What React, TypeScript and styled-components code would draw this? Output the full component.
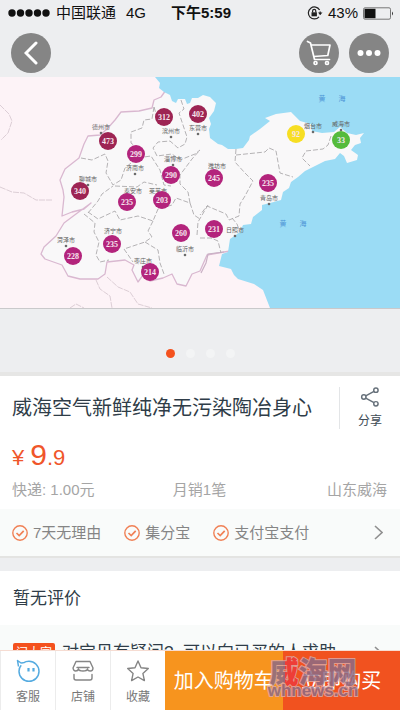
import React from 'react';
import styled, { createGlobalStyle } from 'styled-components';

const GlobalStyle = createGlobalStyle`
  * { box-sizing: border-box; }
  body {
    margin: 0;
    background: #edeef0;
    font-family: "Liberation Sans", "Noto Sans CJK SC", sans-serif;
    color: #2f3d48;
  }
  button { font: inherit; color: inherit; border: 0; padding: 0; background: none; cursor: pointer; }
  h1, h2, p, ul { margin: 0; padding: 0; font-weight: 400; }
  svg { display: block; }
`;

const Page = styled.div`
  display: flex;
  flex-direction: column;
  height: 100vh;
`;

const Scroll = styled.main`
  flex: 1;
  min-height: 0;
  overflow-y: auto;
  scrollbar-width: none;
`;

const StatusBar = styled.header`
  display: grid;
  grid-template-columns: 1fr auto 1fr;
  align-items: center;
  height: 26px;
  padding: 0 6px 0 8px;
  color: #111;
  font-size: 15px;
  line-height: 20px;
`;

const StatusGroup = styled.div<{ $end?: boolean }>`
  display: flex;
  align-items: center;
  justify-content: ${p => (p.$end ? 'flex-end' : 'flex-start')};
  gap: ${p => (p.$end ? 5 : 6)}px;
  white-space: nowrap;
`;

const Network = styled.span`
  margin-left: 4px;
`;

const Clock = styled.time`
  font-weight: 700;
`;

const NavBar = styled.nav`
  display: flex;
  align-items: center;
  gap: 10px;
  height: 51px;
  padding: 3px 11px 0;
`;

const RoundButton = styled.button<{ $first?: boolean }>`
  display: flex;
  align-items: center;
  justify-content: center;
  && {
    width: 40px;
    height: 40px;
    border-radius: 50%;
    background: #858585;
    margin-right: ${p => (p.$first ? 'auto' : '0')};
  }
`;

const MapPicture = styled.svg`
  width: 100%;
  height: auto;
  border-bottom: 1px solid #c9c9cb;
`;

const Dots = styled.div`
  display: flex;
  justify-content: center;
  align-items: center;
  gap: 11px;
  height: 67px;
  padding-top: 25px;
  border-bottom: 4px solid #e6e6e5;
`;

const Dot = styled.button<{ $active?: boolean }>`
  && {
    width: 9px;
    height: 9px;
    border-radius: 50%;
    background: ${p => (p.$active ? '#f4511e' : '#f3f4f5')};
  }
`;

const Product = styled.section`
  background: #fff;
  padding: 11px 13px 8px 12px;
`;

const TitleRow = styled.div`
  display: flex;
  align-items: center;
  justify-content: space-between;
`;

const Title = styled.h1`
  font-size: 20px;
  line-height: 28px;
  white-space: nowrap;
`;

const ShareButton = styled.button`
  && {
    display: flex;
    flex-direction: column;
    align-items: center;
    gap: 6px;
    height: 42px;
    padding: 0 5px 0 18px;
    border-left: 1px solid #e3e5e7;
    font-size: 12px;
    line-height: 16px;
    color: #3e4a55;
  }
`;

const Price = styled.p`
  display: flex;
  align-items: baseline;
  margin-top: 8px;
  color: #f0562a;
  font-size: 22px;
  line-height: 36px;
`;

const PriceWhole = styled.span`
  margin-left: 6px;
  font-size: 30px;
`;

const Facts = styled.div`
  display: grid;
  grid-template-columns: 1fr auto 1fr;
  margin-top: 3px;
  font-size: 15px;
  line-height: 22px;
  color: #a5a5a5;
`;

const Origin = styled.span`
  text-align: right;
`;

const Guarantees = styled.button`
  && {
    display: flex;
    align-items: center;
    justify-content: space-between;
    width: 100%;
    height: 49px;
    padding: 0 17px 0 12px;
    background: #f9fbfa;
    border-bottom: 2px solid #e4e4e2;
    color: #858585;
    font-size: 15px;
    line-height: 22px;
  }
`;

const GuaranteeList = styled.span`
  display: flex;
  gap: 23px;
`;

const Guarantee = styled.span`
  display: flex;
  align-items: center;
  gap: 5px;
`;

const Reviews = styled.section`
  margin-top: 13px;
  padding: 15px 13px 13px;
  background: #fff;
`;

const ReviewsTitle = styled.h2`
  font-size: 17px;
  line-height: 26px;
`;

const Question = styled.button`
  && {
    display: flex;
    align-items: center;
    width: 100%;
    height: 56px;
    padding: 0 17px 0 13px;
    background: #f9fbfa;
    font-size: 17px;
    line-height: 24px;
    white-space: nowrap;
  }
`;

const QuestionText = styled.span`
  flex: 1;
  margin-left: 7px;
  text-align: left;
`;

const Tag = styled.span`
  padding: 0 3px;
  border-radius: 2px;
  background: #f4511e;
  color: #fff;
  font-size: 12px;
  line-height: 20px;
`;

const ActionBar = styled.footer`
  position: relative;
  display: flex;
  height: 60px;
  border-top: 1px solid #f6dcd2;
  background: #fff;
`;

const ToolButton = styled.button`
  && {
    display: flex;
    flex-direction: column;
    align-items: center;
    gap: 6px;
    width: 55px;
    padding-top: 8px;
    border-left: 1px solid #ececec;
    color: #777;
    font-size: 12px;
    line-height: 16px;
  }
`;

const BuyButton = styled.button<{ $tone: string }>`
  && {
    flex: 1;
    background: ${p => p.$tone};
    color: #fff;
    font-size: 20px;
    line-height: 28px;
    white-space: nowrap;
  }
`;

const Watermark = styled.svg`
  position: absolute;
  right: 41px;
  top: 5px;
  pointer-events: none;
  font-weight: 700;
  opacity: 0.85;
  paint-order: stroke fill;
  stroke: #dda7a3;
  stroke-width: 2px;
  fill: #8b6b86;
`;

const bubbleColor = (value: number) => (value > 300 ? '#9d2453' : '#b3247c');

const stations: { x: number; y: number; v: number; fill?: string }[] = [
  { x: 164, y: 117, v: 312 },
  { x: 198, y: 114, v: 402 },
  { x: 108, y: 141, v: 473 },
  { x: 136, y: 154, v: 299 },
  { x: 171, y: 175, v: 290 },
  { x: 80, y: 191, v: 340 },
  { x: 127, y: 202, v: 235 },
  { x: 162, y: 200, v: 203 },
  { x: 214, y: 178, v: 245 },
  { x: 268, y: 183, v: 235 },
  { x: 73, y: 256, v: 228 },
  { x: 112, y: 244, v: 235 },
  { x: 150, y: 272, v: 214 },
  { x: 181, y: 233, v: 260 },
  { x: 214, y: 229, v: 231 },
  { x: 296, y: 134, v: 92, fill: '#f7de23' },
  { x: 341, y: 140, v: 33, fill: '#55bb3c' },
];

const cities: [number, number, string][] = [
  [101, 129, '德州市'],
  [171, 133, '滨州市'],
  [198, 130, '东营市'],
  [135, 170, '济南市'],
  [173, 161, '淄博市'],
  [88, 181, '聊城市'],
  [133, 193, '泰安市'],
  [158, 193, '莱芜市'],
  [217, 168, '潍坊市'],
  [313, 128, '烟台市'],
  [341, 126, '威海市'],
  [269, 200, '青岛市'],
  [66, 242, '菏泽市'],
  [113, 233, '济宁市'],
  [143, 263, '枣庄市'],
  [185, 251, '临沂市'],
  [235, 232, '日照市'],
];

const ShandongMap = () => (
  <MapPicture viewBox="0 77 400 231" role="img" aria-label="山东空气质量地图">
    <rect x="0" y="77" width="400" height="231" fill="#fdf3f7" />
    <path
      fill="#f9f8f9"
      stroke="#d9b8d0"
      strokeWidth="1.3"
      strokeLinejoin="round"
      d="M166 90L161 97L154 100L152 108L139 111L121 112L115 120L107 129L100 135L88 136L84 144L79 158L65 169L60 180L63 190L64 197L62 216L72 212L84 209L91 203L76 214L64 223L56 236L44 247L41 254L45 259L62 265L68 276L80 279L98 279L105 274L107 262L125 260L134 265L132 270L138 282L143 275L150 281L163 278L172 274L177 284L186 286L192 274L200 271L207 255L218 253L224 252L300 240L390 150L350 100z"
    />
    <path
      fill="#9bdcf5"
      d="M155 77L160 83L159 88L164 92L170 95L172 101L176 103L178 99L185 99L187 104L190 103L192 98L198 98L203 95L210 97L216 103L214 111L209 118L211 124L209 129L210 138L218 144L222 145L228 149L236 149L243 148L249 140L250 136L260 129L270 121L265 118L276 114L291 112L300 121L311 124L312 131L322 133L334 132L340 127L347 133L356 135L364 133L360 138L361 143L355 145L351 150L358 155L357 160L347 163L344 156L340 153L335 159L325 161L315 166L305 171L298 177L291 182L289 188L283 192L281 200L270 203L262 205L262 210L253 217L251 224L243 225L240 232L230 239L228 252L222 254L219 266L231 269L234 275L238 279L254 284L263 290L270 308H400V77z"
    />
    <path fill="none" stroke="#c9b1c5" strokeWidth="1.2" d="M224 252L208 254L206 263L201 273" />
    <g fill="none" stroke="#adaaad" strokeWidth="0.9" strokeDasharray="5 2" strokeLinejoin="round">
      <path d="M154 107L152 119L144 120L142 128L131 132L131 143L136 147M154 107L157 117" />
      <path d="M181 100L184 109L179 113L184 128L187 137L185 144L178 148L170 141L158 142L153 148L157 156L172 154L180 160L195 154L200 150" />
      <path d="M81 158L92 160L105 154L108 161L106 173L113 185L121 180L125 168L137 158L151 156L160 170L164 185L171 186" />
      <path d="M88 213L98 201L102 194L113 186M88 212L98 219L115 211L120 220L138 216L153 221L158 209L172 205L176 198L190 203L188 192L180 184L180 175L192 159L200 150" />
      <path d="M84 214L95 223L94 232L99 242L96 255L100 262L109 260" />
      <path d="M115 186L137 187L144 182L157 185M153 221L148 231L152 237L145 242L124 249L133 262M145 242L158 250L160 263L164 274" />
      <path d="M236 149L235 162L245 173L253 181L245 196L240 204L239 216L229 220L226 214L207 206L200 215M236 155L265 152L269 148L276 151L278 162L280 173L293 177" />
      <path d="M331 136L328 145L323 149L306 151L302 158L310 166" />
      <path d="M200 238L211 238L218 241L221 253M190 203L194 215L200 219M232 218L237 224L240 232M197 235L198 222L208 205" />
    </g>
    <g fill="none" stroke="#d8c9d1" strokeWidth="0.9" strokeLinejoin="round" strokeDasharray="6 1">
      <path d="M0 105L9 114L12 121L8 133L1 140M0 187L12 192L24 193L36 200L52 200M96 280L100 289L110 296L112 308M107 277L118 287L130 292L138 304L152 308M70 308L76 304L84 308" />
    </g>
    <g fontFamily='"Liberation Serif", "Noto Sans CJK SC", serif' textAnchor="middle">
      {cities.map(([x, y, name]) => (
        <g key={name}>
          <text x={x} y={y} fontSize="6" fill="#626262">{name}</text>
          <circle cx={x} cy={y + 4} r="1.3" fill="#6b6b6b" />
        </g>
      ))}
      <g fontSize="7" fill="#4d94d6">
        <text x="322" y="101">黄</text>
        <text x="342" y="101">海</text>
        <text x="283" y="226">黄</text>
        <text x="303" y="226">海</text>
      </g>
      {stations.map(s => (
        <g key={`${s.x}-${s.y}`}>
          <circle cx={s.x} cy={s.y} r="9" fill={s.fill ?? bubbleColor(s.v)} />
          <text x={s.x} y={s.y + 3} fontSize="8" fontWeight="700" fill="#f7e6ef">{s.v}</text>
        </g>
      ))}
    </g>
  </MapPicture>
);

const Chevron = () => (
  <svg width="9" height="15" viewBox="0 0 9 15" fill="none" stroke="#909090" strokeWidth="1.6" aria-hidden="true">
    <path d="M1 1l7 6.500-7 6.500" />
  </svg>
);

const Check = () => (
  <svg width="16" height="16" viewBox="0 0 16 16" fill="none" stroke="#f08055" strokeWidth="1.4" aria-hidden="true">
    <circle cx="8" cy="8" r="7.200" />
    <path d="M4.500 8l2.700 2.600 4.500-4.800" strokeWidth="1.7" />
  </svg>
);

export default function App() {
  return (
    <Page>
      <GlobalStyle />
      <Scroll>
        <StatusBar>
          <StatusGroup>
            <svg width="42" height="8" viewBox="0 0 42 8" fill="#111" aria-hidden="true">
              {[4, 12.5, 21, 29.500, 38].map(x => <circle key={x} cx={x} cy="4" r="3.700" />)}
            </svg>
            <span>中国联通</span>
            <Network>4G</Network>
          </StatusGroup>
          <Clock>下午5:59</Clock>
          <StatusGroup $end>
            <svg width="16" height="14" viewBox="0 0 16 14" fill="none" stroke="#222" strokeWidth="1.2" aria-hidden="true">
              <path d="M12.600 4A6 6 0 1 0 12 10.800M13 8.500a6 6 0 0 0 0-3" />
              <path d="M11 6.500h4.500L13.200 9z" fill="#222" stroke="none" />
              <rect x="4.500" y="6.300" width="5.400" height="4" fill="#222" stroke="none" />
              <path d="M5.600 6.500V5a1.600 1.600 0 0 1 3.200 0v1.500" />
            </svg>
            <span>43%</span>
            <svg width="31" height="13" viewBox="0 0 31 13" aria-hidden="true">
              <rect x=".5" y=".8" width="27" height="11.400" rx="1.500" fill="none" stroke="#777" />
              <rect x="1.500" y="1.800" width="11" height="9.400" fill="#111" />
              <path d="M29 4.500q2 2 0 4z" fill="#333" />
            </svg>
          </StatusGroup>
        </StatusBar>
        <NavBar>
          <RoundButton $first aria-label="返回">
            <svg width="14" height="24" viewBox="0 0 14 24" fill="none" stroke="#fff" strokeWidth="3" strokeLinecap="round">
              <path d="M12 2L2 12l10 10" />
            </svg>
          </RoundButton>
          <RoundButton aria-label="购物车">
            <svg width="26" height="26" viewBox="0 0 26 26" fill="none" stroke="#fff" strokeWidth="1.700" strokeLinejoin="round" strokeLinecap="round">
              <path d="M1.500 1.500L4.500 3l4 16.500h15M5.500 5h18.500l-2.200 10.500-14 1" />
              <circle cx="9.500" cy="23" r="1.500" />
              <circle cx="21" cy="23" r="1.500" />
            </svg>
          </RoundButton>
          <RoundButton aria-label="更多">
            <svg width="24" height="6" viewBox="0 0 24 6" fill="#fff">
              <circle cx="3.500" cy="3" r="3" />
              <circle cx="12" cy="3" r="3" />
              <circle cx="20.500" cy="3" r="3" />
            </svg>
          </RoundButton>
        </NavBar>
        <ShandongMap />
        <Dots>
          {[1, 2, 3, 4].map(n => <Dot key={n} $active={n === 1} aria-label={`第${n}张`} />)}
        </Dots>
        <Product>
          <TitleRow>
            <Title>威海空气新鲜纯净无污染陶冶身心</Title>
            <ShareButton>
              <svg width="20" height="22" viewBox="0 0 20 22" fill="none" stroke="#66707a" strokeWidth="1.600" aria-hidden="true">
                <circle cx="3.200" cy="11" r="2.400" />
                <circle cx="16.500" cy="3.500" r="2.400" />
                <circle cx="16.500" cy="18.500" r="2.400" />
                <path d="M5.300 9.800l9.100-5.100M5.300 12.200l9.100 5.100" />
              </svg>
              分享
            </ShareButton>
          </TitleRow>
          <Price>
            ¥<PriceWhole>9</PriceWhole>.9
          </Price>
          <Facts>
            <span>快递: 1.00元</span>
            <span>月销1笔</span>
            <Origin>山东威海</Origin>
          </Facts>
        </Product>
        <Guarantees>
          <GuaranteeList>
            {['7天无理由', '集分宝', '支付宝支付'].map(label => (
              <Guarantee key={label}><Check />{label}</Guarantee>
            ))}
          </GuaranteeList>
          <Chevron />
        </Guarantees>
        <Reviews>
          <ReviewsTitle>暂无评价</ReviewsTitle>
        </Reviews>
        <Question>
          <Tag>问大家</Tag>
          <QuestionText>对宝贝有疑问?{'\u00a0'} 可以向已买的人求助</QuestionText>
          <Chevron />
        </Question>
      </Scroll>
      <ActionBar>
        <ToolButton>
          <svg width="24" height="24" viewBox="0 0 24 24" fill="none" stroke="#55abe0" strokeWidth="1.500" strokeLinejoin="round" aria-hidden="true">
            <path d="M7.500 3.800L5 4L1.500 1.500L2.500 7.500M7.500 3.800C9 2.800 11 2.300 13 2.300a10 10 0 1 1-10 10c0-2.300.7-4.300 2.200-6" />
            <path d="M12.500 9v3.500M17.500 9v3.500" strokeWidth="2.200" />
          </svg>
          客服
        </ToolButton>
        <ToolButton>
          <svg width="24" height="24" viewBox="0 0 24 24" fill="none" stroke="#858585" strokeWidth="1.400" strokeLinejoin="round" strokeLinecap="round" aria-hidden="true">
            <path d="M5 2.500h14l3 6.500q0 3-2.700 3T16.500 10q-.5 2-4.500 2t-4.500-2q-.5 2-2.800 2T2 9zM6 8.500h12M3 15.500V19q0 2 2 2h14q2 0 2-2v-3.500" />
          </svg>
          店铺
        </ToolButton>
        <ToolButton>
          <svg width="24" height="24" viewBox="0 0 24 24" fill="none" stroke="#858585" strokeWidth="1.400" strokeLinejoin="round" aria-hidden="true">
            <path d="M12 2l3 6.700 7.300.8-5.400 4.900 1.500 7.200L12 18l-6.400 3.600 1.500-7.200-5.400-4.900L9 8.700z" />
          </svg>
          收藏
        </ToolButton>
        <BuyButton $tone="#f7941e">加入购物车</BuyButton>
        <BuyButton $tone="#f1521f">立即购买</BuyButton>
        <Watermark width="92" height="46" viewBox="0 0 92 46" aria-hidden="true">
          <defs>
            <linearGradient id="nameFill" gradientUnits="userSpaceOnUse" x1="0" y1="0" x2="92" y2="0">
              <stop offset="0.200" stopColor="#8b6b86" />
              <stop offset="0.200" stopColor="#ee3a3c" />
              <stop offset="0.340" stopColor="#ee3a3c" />
              <stop offset="0.340" stopColor="#8b6b86" />
            </linearGradient>
          </defs>
          <text x="46" y="27" textAnchor="middle" fontFamily='"Noto Sans CJK SC", sans-serif' fontWeight="900" fontSize="29" fill="url(#nameFill)">威海网</text>
          <text x="46" y="40" textAnchor="middle" fontSize="17">whnews.cn</text>
        </Watermark>
      </ActionBar>
    </Page>
  );
}
